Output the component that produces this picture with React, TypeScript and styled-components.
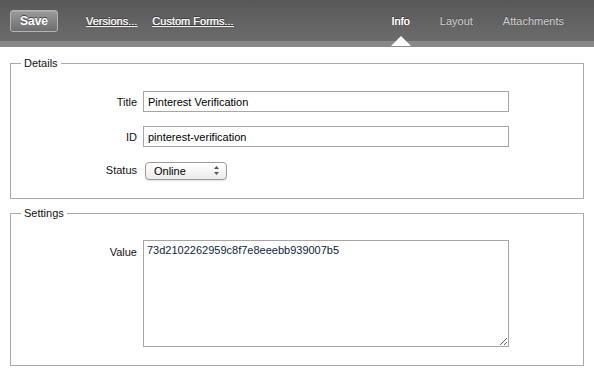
import styled, { createGlobalStyle } from "styled-components";

const GlobalStyle = createGlobalStyle`
  html, body {
    margin: 0;
    padding: 0;
    background: #ffffff;
    font-family: "Liberation Sans", Arial, Helvetica, sans-serif;
  }
`;

const Page = styled.div`
  width: 594px;
  height: 380px;
  background: #ffffff;
  overflow: hidden;
`;

const TopBar = styled.div`
  height: 41px;
  display: flex;
  align-items: center;
  padding: 0 0 0 10px;
  background: linear-gradient(to bottom, #585858, #6c6c6c);
`;

const SaveButton = styled.button`
  width: 48px;
  height: 22px;
  margin: 0 28px 0 0;
  padding: 0;
  font-family: inherit;
  font-size: 12px;
  font-weight: bold;
  color: #ffffff;
  text-shadow: 0 -1px 0 #444;
  border: 1px solid #b4b4b4;
  border-radius: 3px;
  background: linear-gradient(to bottom, #9a9a9a, #6e6e6e);
  box-shadow: inset 0 1px 0 rgba(255, 255, 255, 0.15);
`;

const MenuLink = styled.a`
  font-size: 11px;
  color: #f2f2f2;
  text-decoration: underline;
  text-shadow: 0 0 0.6px #fff, 0 -1px 0 #3a3a3a;
  margin-right: 15px;
  cursor: pointer;
`;

const Tabs = styled.div`
  margin-left: auto;
  display: flex;
  gap: 30px;
  padding-right: 30px;
`;

const Tab = styled.span<{ $active?: boolean }>`
  position: relative;
  font-size: 11px;
  color: ${(p) => (p.$active ? "#ffffff" : "#cfcfcf")};
  text-shadow: ${(p) => (p.$active ? "0 0 0.6px #fff, 0 -1px 0 #3a3a3a" : "0 -1px 0 #4a4a4a")};

  ${(p) =>
    p.$active &&
    `
    &::after {
      content: "";
      position: absolute;
      left: 50%;
      top: 21px;
      margin-left: -10px;
      border-left: 10px solid transparent;
      border-right: 10px solid transparent;
      border-bottom: 10px solid #ffffff;
    }
  `}
`;

const Strip = styled.div`
  height: 6px;
  background: #888888;
`;

const Content = styled.div`
  padding: 9px 10px 0 10px;
  display: flex;
  flex-direction: column;
  gap: 7px;
`;

const Group = styled.fieldset<{ $pt: number; $pb: number }>`
  margin: 0;
  padding: ${(p) => p.$pt}px 0 ${(p) => p.$pb}px 0;
  border: 1px solid #aaaaaa;
  min-width: 0;
`;

const Legend = styled.legend`
  margin-left: 10px;
  padding: 0 3px;
  font-size: 11px;
  color: #111;
  line-height: 14px;
`;

const Rows = styled.div`
  display: grid;
  grid-template-columns: 126px 366px;
  column-gap: 6px;
  row-gap: 14px;
  align-items: center;
`;

const Label = styled.label<{ $top?: boolean }>`
  font-size: 11px;
  color: #111;
  text-align: right;
  align-self: ${(p) => (p.$top ? "start" : "center")};
  padding-top: ${(p) => (p.$top ? "6px" : "0")};
`;

const TextInput = styled.input`
  box-sizing: border-box;
  width: 366px;
  height: 21px;
  margin: 0;
  padding: 0 4px;
  font-family: inherit;
  font-size: 11px;
  color: #000;
  border: 1px solid #a6a6a6;
  border-radius: 0;
  outline: none;
`;

const SelectWrap = styled.div`
  position: relative;
  width: 82px;
  height: 18px;
  margin-left: 2px;
`;

const Select = styled.select`
  box-sizing: border-box;
  appearance: none;
  width: 82px;
  height: 18px;
  margin: 0;
  padding: 0 0 0 8px;
  font-family: inherit;
  font-size: 11px;
  color: #000;
  border: 1px solid #9a9a9a;
  border-radius: 4px;
  background: linear-gradient(to bottom, #ffffff, #ececec);
  box-shadow: 0 1px 1px rgba(0, 0, 0, 0.12);
  outline: none;
`;

const Arrows = styled.svg`
  position: absolute;
  right: 8px;
  top: 5px;
  pointer-events: none;
`;

const ValueArea = styled.textarea`
  box-sizing: border-box;
  width: 366px;
  height: 107px;
  margin: 0;
  padding: 3px 3px;
  font-family: inherit;
  font-size: 11px;
  color: #0d1d45;
  border: 1px solid #a6a6a6;
  border-radius: 0;
  outline: none;
  resize: both;
`;

export default function App() {
  return (
    <Page>
      <GlobalStyle />
      <TopBar>
        <SaveButton>Save</SaveButton>
        <MenuLink>Versions...</MenuLink>
        <MenuLink>Custom Forms...</MenuLink>
        <Tabs>
          <Tab $active>Info</Tab>
          <Tab>Layout</Tab>
          <Tab>Attachments</Tab>
        </Tabs>
      </TopBar>
      <Strip />
      <Content>
        <Group $pt={21} $pb={19}>
          <Legend>Details</Legend>
          <Rows>
            <Label>Title</Label>
            <TextInput defaultValue="Pinterest Verification" />
            <Label>ID</Label>
            <TextInput defaultValue="pinterest-verification" />
            <Label>Status</Label>
            <SelectWrap>
              <Select defaultValue="online">
                <option value="online">Online</option>
                <option value="offline">Offline</option>
              </Select>
              <Arrows width="5" height="9" viewBox="0 0 5 9">
                <path d="M2.5 0 L5 3 L0 3 Z" fill="#555" />
                <path d="M2.5 9 L5 6 L0 6 Z" fill="#555" />
              </Arrows>
            </SelectWrap>
          </Rows>
        </Group>
        <Group $pt={20} $pb={18}>
          <Legend>Settings</Legend>
          <Rows>
            <Label $top>Value</Label>
            <ValueArea defaultValue="73d2102262959c8f7e8eeebb939007b5" />
          </Rows>
        </Group>
      </Content>
    </Page>
  );
}
